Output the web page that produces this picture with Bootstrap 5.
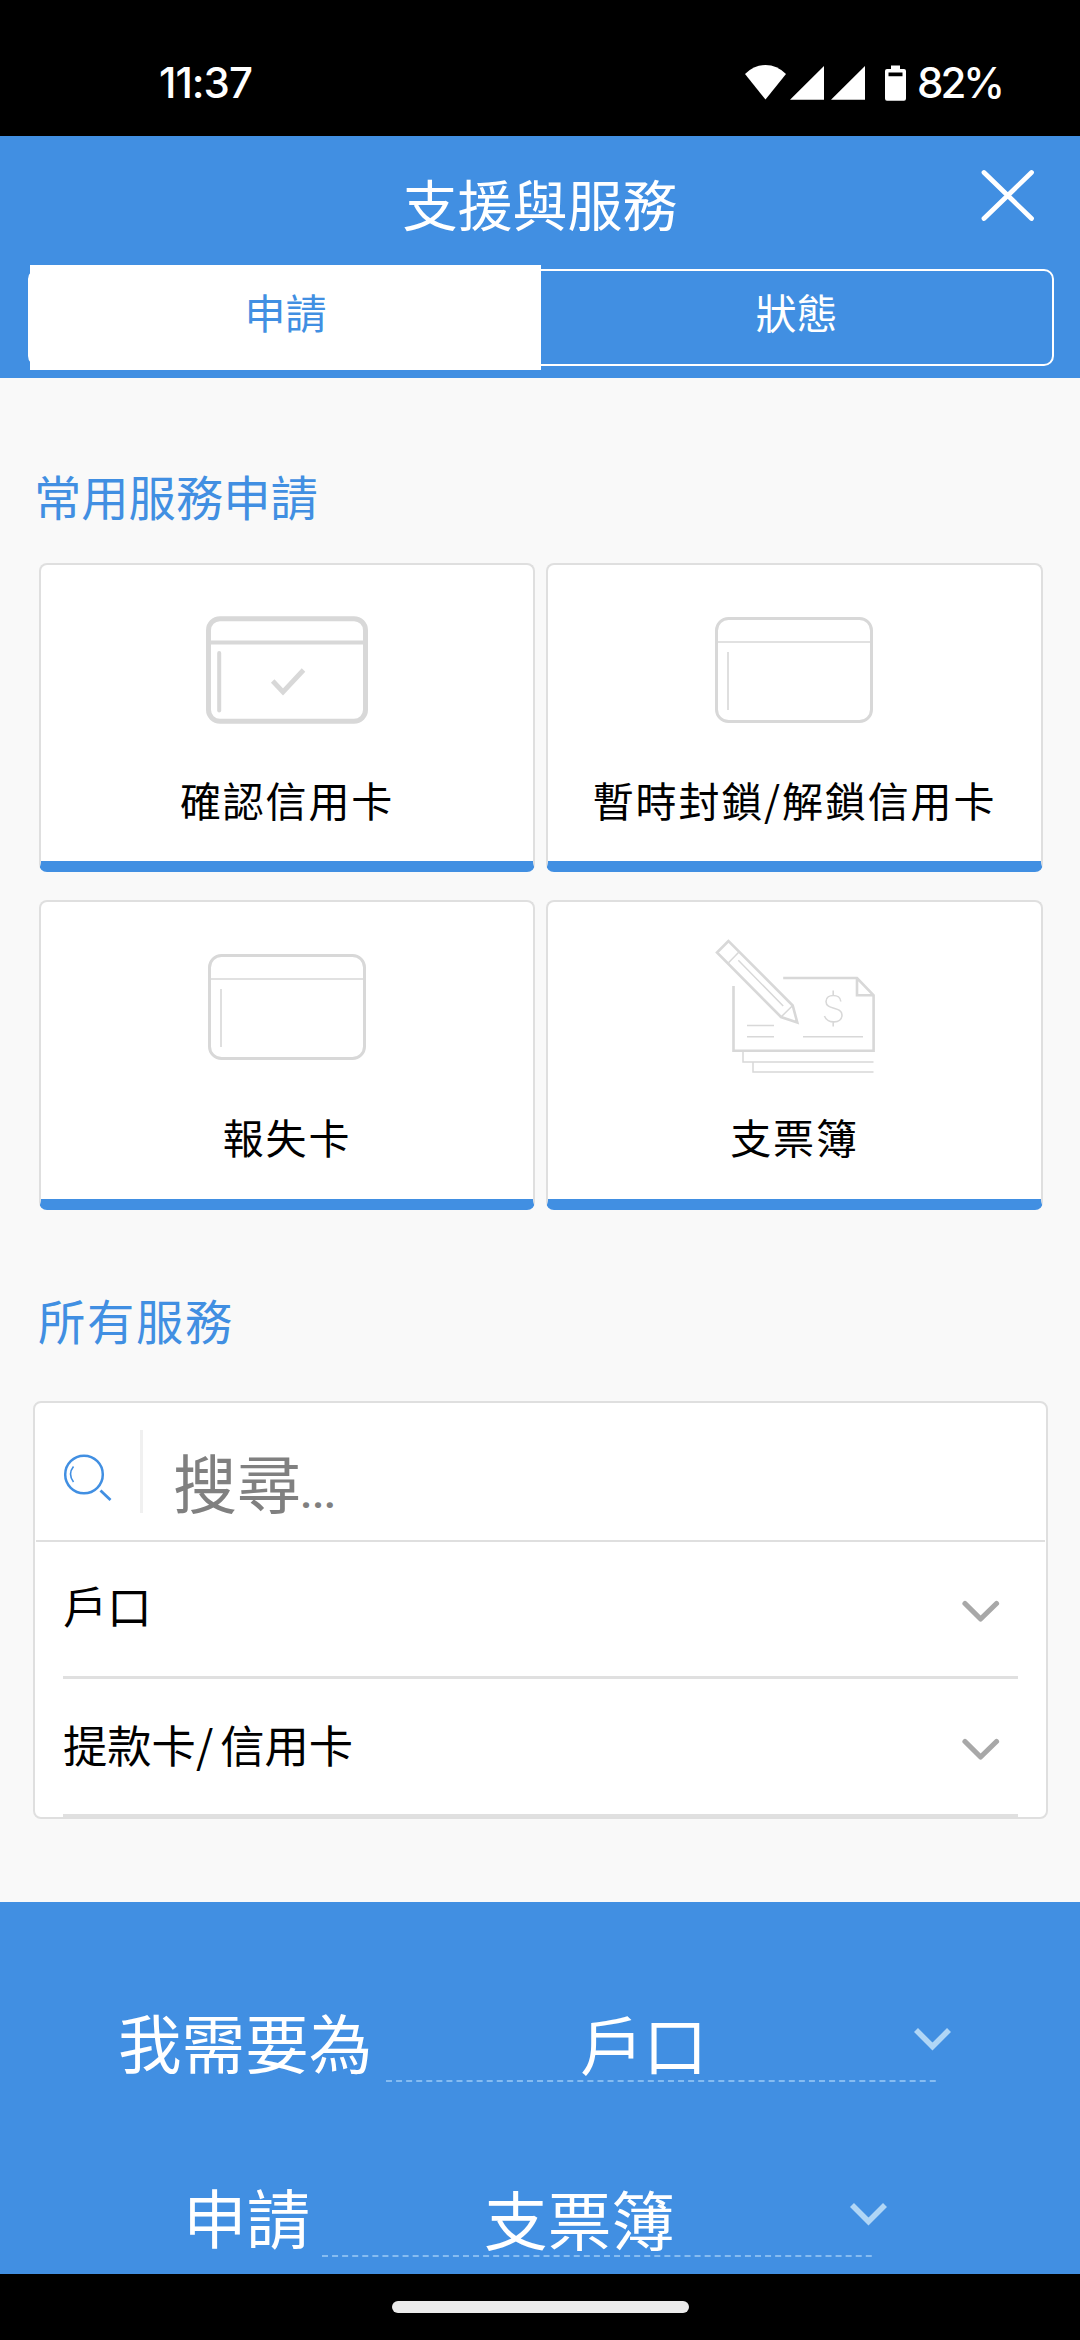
<!DOCTYPE html>
<html lang="zh-Hant">
<head>
<meta charset="utf-8">
<meta name="viewport" content="width=device-width, initial-scale=1">
<title>支援與服務</title>
<link href="https://cdn.jsdelivr.net/npm/bootstrap@5.3.0/dist/css/bootstrap.min.css" rel="stylesheet">
<style>
  :root { --brand: #418fe2; --line: #dfdfdf; }
  body { width: 1080px; height: 2340px; overflow: hidden; background: #f9f9f9; color: #000;
    font-family: "Noto Sans CJK TC", sans-serif; line-height: 60px; }
  svg { display: block; flex: none; }
  .status { height: 136px; background: #000; padding: 31px 76px 0 159px;
    font: 500 42px/104px Inter, sans-serif; letter-spacing: -1px; }
  .status .battery { width: 87px; letter-spacing: -3px; white-space: nowrap; }
  .status svg { margin: 32px 9px 0 0; }
  .app-head { height: 242px; background: var(--brand); }
  .head-top { height: 133px; padding: 26px 0 0 60px; }
  .head-top h1 { font-size: 55px; line-height: 80px; font-weight: 400; padding: 0 0 0 40px; }
  .head-top .close-x { margin: 7px 45px 0 0; }
  .switch { height: 97px; margin: 0 26px 0 28px; border: 2px solid #fff; border-radius: 10px;
    font-size: 41px; line-height: 89px; }
  .switch .on { flex: 0 0 511px; height: 105px; margin-top: -6px; background: #fff; color: var(--brand); padding-top: 2px; }
  .switch .off { line-height: 81px; }
  .sec-title { font-size: 47.3px; line-height: 60px; font-weight: 400; color: var(--brand); }
  .sec-common { padding: 88px 0 37px 34px; }
  .sec-all { padding: 1px 0 51px 38px; letter-spacing: 1.7px; }
  .tile-row { margin: 0 37px 28px 39px; }
  .tile-row.row-end { margin-bottom: 79px; }
  .tile { width: 496px; height: 309px; border: 2px solid var(--line); border-bottom: 11px solid var(--brand); border-radius: 8px; font-size: 41px; letter-spacing: 1.85px; }
  .tile + .tile { width: 497px; }
  .row-end .tile { height: 310px; }
  .tile svg { fill: none; stroke: #d8d8d8; }
  .tile-label { margin-top: 4px; white-space: nowrap; }
  .finder { height: 418px; margin: 0 32px 0 33px; border: 2px solid var(--line); border-radius: 8px; background: #fff; }
  .find-row { height: 139px; margin: 0 1px; border-bottom: 2px solid var(--line); padding: 27px 0 0 27px; }
  .find-row svg { margin-top: 24px; }
  .find-sep { width: 3px; height: 83px; background: #f0f0f0; margin-left: 28px; }
  .find-text { font-size: 64px; line-height: 100px; color: #808080; margin-left: 30px; white-space: nowrap; }
  .find-text span { font: 500 45px/60px Roboto, sans-serif; letter-spacing: -.6px; margin-left: -1px; }
  .item { height: 137px; margin: 0 28px; border-bottom: 3px solid #e0e0e0; font-size: 44.3px; line-height: 126px; padding-right: 18px; word-spacing: -3px; }
  .item.last-item { height: 138px; line-height: 130px; }
  .item svg { fill: none; stroke: #a8a8a8; margin-top: 57px; stroke-width: 5.2; stroke-linecap: round; stroke-linejoin: round; }
  .item.last-item svg { margin-top: 58px; }
  .need { height: 372px; margin-top: 83px; background: var(--brand); color: #fff; font-size: 63.6px; line-height: 100px; overflow: hidden; }
  .need-a { height: 263px; padding: 88px 0 0 118px; }
  .need-b { padding-left: 183px; }
  .need-a > :first-child { width: 268px; }
  .need-b > :first-child { width: 139px; }
  .pick { width: 550px; height: 103px; }
  .pick-text { padding: 2px 35px 0 0; }
  .pick svg { position: absolute; left: 0; top: 90px; }
  .pick svg.chev { left: 527px; top: 37px; }
  .navbar-zone { height: 66px; background: #000; padding-top: 27px; }
  .pill { width: 297px; height: 12px; background: #ebebeb; border-radius: 6px; }
</style>
<script src="https://cdn.jsdelivr.net/npm/bootstrap@5.3.0/dist/js/bootstrap.bundle.min.js"></script>
</head>
<body>
<div class="status d-flex text-white">
  <div class="me-auto">11:37</div>
  <svg width="164" height="40" viewBox="744 63 164 40" fill="#fff">
    <path d="M745 74Q754 65 765.500 65T786 74L765.500 99.500Z"/>
    <path d="M790 99.700L824 66V99.700ZM831 99.700L865 66V99.700Z"/>
    <path fill-rule="evenodd" d="M891 65.500H900V69H904Q906 69 906 71V98.500Q906 100.700 904 100.700H887Q885 100.700 885 98.500V71Q885 69 887 69H891ZM888.500 72.500V76.200H902.500V72.500Z"/>
  </svg>
  <div class="battery">82%</div>
</div>

<header class="app-head text-white">
  <div class="head-top d-flex">
    <h1 class="flex-fill text-center m-0">支援與服務</h1>
    <svg class="close-x" width="55" height="53" viewBox="979 168 55 53" stroke="#fff" stroke-width="4.800" stroke-linecap="round"><path d="M983 171.500L1030.500 217.500M1030.500 171.500L983 217.500"/></svg>
  </div>
  <div class="switch d-flex text-center">
    <div class="on">申請</div>
    <div class="off flex-fill">狀態</div>
  </div>
</header>

<main>
  <h2 class="sec-title sec-common mb-0">常用服務申請</h2>
  <div class="tile-row d-flex justify-content-between">
    <div class="tile bg-white d-flex flex-column align-items-center">
      <svg width="200" height="200" viewBox="187 565 200 200">
        <rect x="208.500" y="618.700" width="157" height="102.600" rx="11.500" stroke-width="5"/>
        <path d="M210 642.500H364" stroke-width="4"/><path d="M219.200 653V710.500" stroke-width="4" stroke-linecap="round"/>
        <path d="M272.700 681L283 692L303.500 670" stroke-width="4.800"/>
      </svg>
      <div class="tile-label">確認信用卡</div>
    </div>
    <div class="tile bg-white d-flex flex-column align-items-center">
      <svg width="201" height="200" viewBox="694 565 201 200">
        <rect x="716.500" y="618.500" width="155" height="103" rx="12" stroke-width="3"/>
        <path d="M717 642H871M728 652V710" stroke-width="1.600"/>
      </svg>
      <div class="tile-label">暫時封鎖/解鎖信用卡</div>
    </div>
  </div>
  <div class="tile-row row-end d-flex justify-content-between">
    <div class="tile bg-white d-flex flex-column align-items-center">
      <svg width="200" height="200" viewBox="187 902 200 200">
        <rect x="209.500" y="955.500" width="155" height="103" rx="12" stroke-width="3"/>
        <path d="M210 979H364M221 989V1047" stroke-width="1.600"/>
      </svg>
      <div class="tile-label">報失卡</div>
    </div>
    <div class="tile bg-white d-flex flex-column align-items-center">
      <svg width="201" height="200" viewBox="694 902 201 200">
        <path stroke-width="2.600" d="M728.500 941L717 952.500L781 1017L797.300 1022.500L792.700 1005.500Z"/>
        <path stroke-width="1.500" d="M738.700 952.300L728.500 962.700M738.300 960.300L783.200 1006M792.700 1005.500L781 1017"/>
        <path stroke-width="2.600" d="M733.500 986V1050.700H873.600V995.300L857 978H783.200M857 978V995.300H873.600"/>
        <path stroke-width="1.500" d="M747 1025.500H774M747 1036.700H774M803 1036.700H863M743 1052V1062H873.500M753 1062V1072H873.500"/>
        <path stroke-width="1.600" d="M833.200 990.500V995.500M833.200 1021.500V1026.500M840.800 1001.500C840.500 993.500 826 993.500 826 1001.500C826 1010.500 842 1006 842 1015C842 1024 827 1024 824.500 1016"/>
      </svg>
      <div class="tile-label">支票簿</div>
    </div>
  </div>

  <h2 class="sec-title sec-all mb-0">所有服務</h2>
  <div class="finder">
    <div class="find-row d-flex">
      <svg width="49" height="48" viewBox="63 1454 49 48" fill="none" stroke="#418fe2">
        <circle cx="84" cy="1474.500" r="18.800" stroke-width="2.500"/>
        <path d="M73.500 1466.500Q67.500 1474 73.500 1482" stroke-width="1.600"/>
        <path d="M100.500 1490.500L110.500 1500" stroke-width="2.800"/>
      </svg>
      <div class="find-sep"></div>
      <div class="find-text">搜尋<span>...</span></div>
    </div>
    <div class="item d-flex justify-content-between align-items-start">
      <div>戶口</div>
      <svg width="39" height="24" viewBox="0 0 39 24"><path d="M4 4.500L19.600 20L35.500 4.500"/></svg>
    </div>
    <div class="item last-item d-flex justify-content-between align-items-start">
      <div>提款卡/ 信用卡</div>
      <svg width="39" height="24" viewBox="0 0 39 24"><path d="M4 4.500L19.600 20L35.500 4.500"/></svg>
    </div>
  </div>

  <section class="need">
    <div class="need-a d-flex">
      <div>我需要為</div>
      <div class="pick position-relative">
        <div class="pick-text text-center">戶口</div>
        <svg class="chev" width="38" height="26" viewBox="0 0 38 26" fill="none" stroke="#b0d6f6" stroke-width="5.600"><path d="M3 3L19.500 19.500L36 3"/></svg>
        <svg width="550" height="2"><path d="M0 1H550" stroke="#86bcf1" stroke-width="2" stroke-dasharray="6 4.070"/></svg>
      </div>
    </div>
    <div class="need-b d-flex">
      <div>申請</div>
      <div class="pick position-relative">
        <div class="pick-text text-center">支票簿</div>
        <svg class="chev" width="38" height="26" viewBox="0 0 38 26" fill="none" stroke="#b0d6f6" stroke-width="5.600"><path d="M3 3L19.500 19.500L36 3"/></svg>
        <svg width="550" height="2"><path d="M0 1H550" stroke="#86bcf1" stroke-width="2" stroke-dasharray="6 4.070"/></svg>
      </div>
    </div>
  </section>
</main>
<footer class="navbar-zone d-flex justify-content-center"><div class="pill"></div></footer>
</body>
</html>
